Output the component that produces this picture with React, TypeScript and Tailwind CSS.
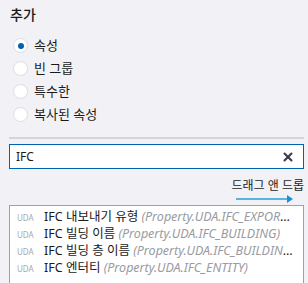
import { X } from "lucide-react";

const options = ["속성", "빈 그룹", "특수한", "복사된 속성"];

const items = [
  { name: "IFC 내보내기 유형", prop: "(Property.UDA.IFC_EXPORT_TYPE)" },
  { name: "IFC 빌딩 이름", prop: "(Property.UDA.IFC_BUILDING)" },
  { name: "IFC 빌딩 층 이름", prop: "(Property.UDA.IFC_BUILDING_STOREY)" },
  { name: "IFC 엔터티", prop: "(Property.UDA.IFC_ENTITY)" },
];

export default function App() {
  return (
    <main className="w-[308px] h-[283px] overflow-hidden bg-[#f2f2f6] pl-[9px] pr-[4px] font-['Noto_Sans','Noto_Sans_CJK_KR',sans-serif] text-[#1a1a1a]">
      <h1 className="pt-[5px] pl-[1px] text-[14px] leading-[20px] font-medium">추가</h1>

      <div className="mt-[9px] flex flex-col">
        {options.map((o, i) => (
          <label key={o} className="h-[23px] flex items-center gap-[6px] pl-[4px] text-[13px]">
            <span className="w-[15px] h-[15px] rounded-full bg-white border border-[#dcdce2] flex items-center justify-center">
              {i === 0 && <span className="w-[6px] h-[6px] rounded-full bg-[#0063b1]" />}
            </span>
            {o}
          </label>
        ))}
      </div>

      <div className="mt-[11px] h-[2px] bg-[#d4d4da]" />

      <div className="mt-[5px] h-[25px] flex items-center bg-white border border-[#0063b1] pl-[6px] pr-[8px] text-[12px]">
        <span className="flex-1">IFC</span>
        <X className="w-[14px] h-[14px] text-[#3a3a48]" strokeWidth={3.5} />
      </div>

      <div className="mt-[9px] flex flex-col items-end">
        <span className="text-[12px] leading-[16px]">드래그 앤 드롭</span>
        <svg width="58" height="8" viewBox="0 0 58 8" className="mt-[1px] mr-[10px]">
          <line x1="0" y1="4" x2="52" y2="4" stroke="#5ab4e2" strokeWidth="2" />
          <path d="M51 0 L57 4 L51 8 Z" fill="#1f8fd4" />
        </svg>
      </div>

      <div className="mt-[2px] h-[80px] bg-white border border-[#a0a0a6] border-b-0 pt-[3px] pl-[7px] pr-[8px]">
        {items.map((it) => (
          <div key={it.name} className="h-[17px] flex items-center whitespace-nowrap overflow-hidden">
            <span className="w-[27px] shrink-0 text-[8px] text-[#a8a8ae]">UDA</span>
            <span className="truncate text-[12.5px]">
              {it.name} <span className="italic text-[#9a9aa0]">{it.prop}</span>
            </span>
          </div>
        ))}
      </div>
    </main>
  );
}
